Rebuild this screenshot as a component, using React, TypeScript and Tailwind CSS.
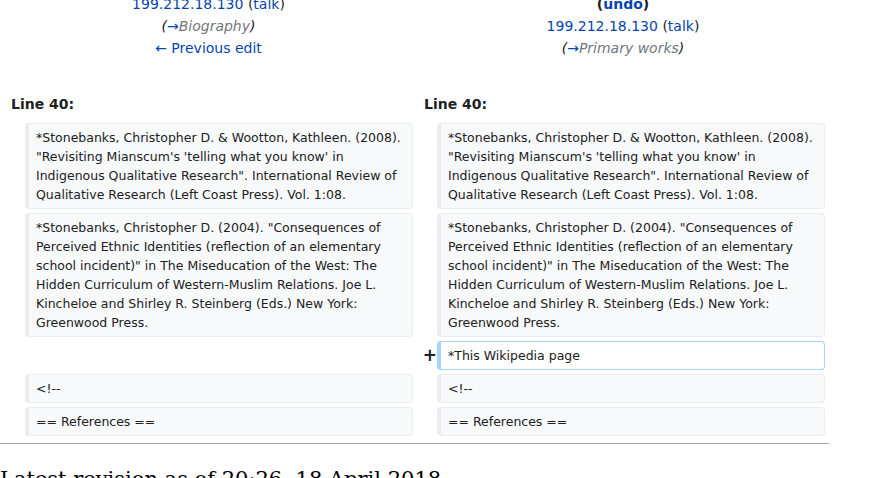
import React from "react"

const LINK = "text-[#0645ad]"

type Row = {
  left?: string
  right: string
  added?: boolean
}

const rows: Row[] = [
  {
    left: `*Stonebanks, Christopher D. & Wootton, Kathleen. (2008). "Revisiting Mianscum's 'telling what you know' in Indigenous Qualitative Research". International Review of Qualitative Research (Left Coast Press). Vol. 1:08.`,
    right: `*Stonebanks, Christopher D. & Wootton, Kathleen. (2008). "Revisiting Mianscum's 'telling what you know' in Indigenous Qualitative Research". International Review of Qualitative Research (Left Coast Press). Vol. 1:08.`,
  },
  {
    left: `*Stonebanks, Christopher D. (2004). "Consequences of Perceived Ethnic Identities (reflection of an elementary school incident)" in The Miseducation of the West: The Hidden Curriculum of Western-Muslim Relations. Joe L. Kincheloe and Shirley R. Steinberg (Eds.) New York: Greenwood Press.`,
    right: `*Stonebanks, Christopher D. (2004). "Consequences of Perceived Ethnic Identities (reflection of an elementary school incident)" in The Miseducation of the West: The Hidden Curriculum of Western-Muslim Relations. Joe L. Kincheloe and Shirley R. Steinberg (Eds.) New York: Greenwood Press.`,
  },
  { right: "*This Wikipedia page", added: true },
  { left: "<!--", right: "<!--" },
  { left: "== References ==", right: "== References ==" },
]

function Cell({ text, added }: { text: string; added?: boolean }) {
  return (
    <div
      className={
        added
          ? "rounded-[4px] border border-l-4 border-[#a3d3ff] bg-white px-[7px] py-[4px] whitespace-pre-wrap"
          : "rounded-[4px] border border-l-4 border-[#eaecf0] bg-[#f8f9fa] px-[7px] py-[4px] whitespace-pre-wrap"
      }
    >
      {text}
    </div>
  )
}

export default function App() {
  return (
    <div className="w-[829px] font-['DejaVu_Sans',sans-serif] text-[#202122]">
      {/* revision headers */}
      <div className="-mt-[7px] grid grid-cols-[417px_412px] text-center text-[14px] leading-[22px]">
        <div>
          <div>
            <a className={LINK}>199.212.18.130</a> (<a className={LINK}>talk</a>)
          </div>
          <div className="italic">
            (<span className={LINK}>→</span>
            <span className="text-[#72777d]">Biography</span>)
          </div>
          <div>
            <a className={LINK}>← Previous edit</a>
          </div>
        </div>
        <div>
          <div className="font-bold">
            (<a className={LINK}>undo</a>)
          </div>
          <div>
            <a className={LINK}>199.212.18.130</a> (<a className={LINK}>talk</a>)
          </div>
          <div className="italic">
            (<span className={LINK}>→</span>
            <span className="text-[#72777d]">Primary works</span>)
          </div>
        </div>
      </div>

      {/* diff table */}
      <div className="mt-[34px] grid grid-cols-[25px_388px_24px_388px] gap-y-[4px]">
        <div className="col-span-2 pb-[4px] pl-[11px] text-[14px] leading-[22px] font-bold">Line 40:</div>
        <div className="col-span-2 pb-[4px] pl-[11px] text-[14px] leading-[22px] font-bold">Line 40:</div>
        {rows.map((r, i) => (
          <React.Fragment key={i}>
            <div />
            <div className="text-[12.5px] leading-[19px]">
              {r.left !== undefined && <Cell text={r.left} />}
            </div>
            <div className="flex items-center justify-end text-[17px] font-bold leading-none">
              {r.added ? "+" : ""}
            </div>
            <div className="text-[12.5px] leading-[19px]">
              <Cell text={r.right} added={r.added} />
            </div>
          </React.Fragment>
        ))}
      </div>

      <div className="mt-[7px] border-t border-[#a2a9b1]" />
      <h2 className="mt-[22px] font-['DejaVu_Serif',serif] text-[21px] leading-[1.3] text-black">
        Latest revision as of 20:26, 18 April 2018
      </h2>
    </div>
  )
}
